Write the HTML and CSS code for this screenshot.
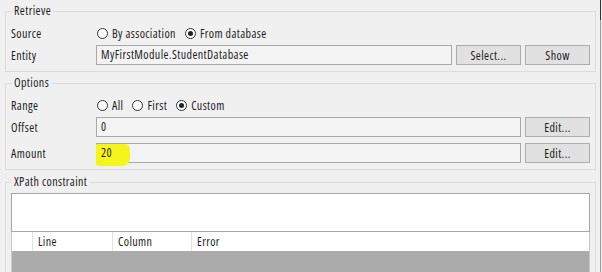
FILE: index.html
```html
<!DOCTYPE html>
<html lang="en">
<head>
    <meta charset="UTF-8">
    <meta name="viewport" content="width=device-width, initial-scale=1.0">
    <title>Retrieve properties</title>
    <link rel="stylesheet" href="styles.css">
</head>
<body>
    <div class="window">
        <div class="panel">
            <fieldset class="group">
                <legend>Retrieve</legend>
                <div class="row">
                    <span class="label">Source</span>
                    <div class="radios">
                        <span class="radio"><span class="dot"></span>By association</span>
                        <span class="radio checked"><span class="dot"></span>From database</span>
                    </div>
                </div>
                <div class="row">
                    <span class="label">Entity</span>
                    <div class="field">MyFirstModule.StudentDatabase</div>
                    <button class="btn">Select...</button>
                    <button class="btn">Show</button>
                </div>
            </fieldset>

            <fieldset class="group">
                <legend>Options</legend>
                <div class="row">
                    <span class="label">Range</span>
                    <div class="radios">
                        <span class="radio"><span class="dot"></span>All</span>
                        <span class="radio"><span class="dot"></span>First</span>
                        <span class="radio checked"><span class="dot"></span>Custom</span>
                    </div>
                </div>
                <div class="row">
                    <span class="label">Offset</span>
                    <div class="field">0</div>
                    <button class="btn">Edit...</button>
                </div>
                <div class="row row-amount">
                    <span class="label">Amount</span>
                    <div class="field field-marked">
                        <span class="marker"></span>
                        <span class="value">20</span>
                    </div>
                    <button class="btn">Edit...</button>
                </div>
            </fieldset>

            <fieldset class="group group-xpath">
                <legend>XPath constraint</legend>
                <div class="editor"></div>
                <div class="errors">
                    <div class="errors-head">
                        <span class="cell cell-first"></span>
                        <span class="cell cell-line">Line</span>
                        <span class="cell cell-col">Column</span>
                        <span class="cell cell-error">Error</span>
                    </div>
                    <div class="errors-body"></div>
                </div>
            </fieldset>
        </div>
        <div class="edge"></div>
    </div>
</body>
</html>
```

FILE: styles.css
```css
* {
    margin: 0;
    padding: 0;
    box-sizing: border-box;
}

body {
    font-family: "Open Sans", Lato, sans-serif;
    font-size: 12px;
    font-stretch: 75%;
    letter-spacing: 0.4px;
    color: #1e1e1e;
    background: #f0f0f0;
    overflow: hidden;
}

.window {
    display: flex;
    height: 272px;
}

.panel {
    flex: 1;
    padding: 3px 4px 0 5px;
    overflow: hidden;
}

.edge {
    width: 1px;
    margin-right: 1px;
    background: linear-gradient(180deg, #333 0, #333 20px, #9c9c9c 20px);
}

/* group boxes */
.group {
    border: 1px solid #dcdcdc;
    padding: 4px 5px 6px;
    margin-bottom: 3px;
}

.group + .group {
    margin-bottom: 4px;
}

.group legend {
    margin-left: 1px;
    padding: 0 2px;
    line-height: 16px;
}

.row {
    display: flex;
    align-items: center;
    height: 20px;
}

.row + .row {
    margin-top: 2px;
}

.row-amount {
    margin-top: 6px !important;
}

.label {
    flex: 0 0 85px;
}

/* radio buttons */
.radios {
    display: flex;
    align-items: center;
    gap: 9px;
    padding-left: 1px;
}

.radio {
    display: flex;
    align-items: center;
    gap: 4px;
}

.dot {
    width: 11px;
    height: 11px;
    border: 1px solid #333;
    border-radius: 50%;
    background: #fff;
    display: flex;
    align-items: center;
    justify-content: center;
}

.radio.checked .dot::after {
    content: "";
    width: 5px;
    height: 5px;
    border-radius: 50%;
    background: #222;
}

/* text fields and buttons */
.field {
    flex: 1;
    height: 20px;
    border: 1px solid #a9a9a9;
    background: #f3f3f3;
    padding-left: 4px;
    line-height: 18px;
    white-space: nowrap;
}

.field-marked {
    position: relative;
}

.marker {
    position: absolute;
    left: -1px;
    top: 0;
    width: 34px;
    height: 22px;
    background: #f5f51c;
    border-radius: 1px 5px 8px 3px;
    filter: blur(0.6px);
}

.value {
    position: relative;
}

.btn {
    flex: 0 0 65px;
    height: 20px;
    margin-left: 4px;
    font: inherit;
    letter-spacing: inherit;
    color: #1e1e1e;
    background: #e1e1e1;
    border: 1px solid #adadad;
}

/* xpath */
.group-xpath {
    padding-top: 3px;
}

.editor {
    height: 39px;
    background: #fff;
    border: 1px solid #a6a6a6;
}

.errors {
    border-left: 1px solid #c8c8c8;
    border-right: 1px solid #c8c8c8;
}

.errors-head {
    display: flex;
    height: 19px;
    background: #fff;
}

.cell {
    line-height: 19px;
    padding-left: 5px;
    border-right: 1px solid #e2e2e2;
}

.cell-first {
    flex: 0 0 21px;
}

.cell-line {
    flex: 0 0 80px;
}

.cell-col {
    flex: 0 0 79px;
}

.cell-error {
    flex: 1;
    border-right: 0;
}

.errors-body {
    height: 40px;
    background: #ababab;
}
```
